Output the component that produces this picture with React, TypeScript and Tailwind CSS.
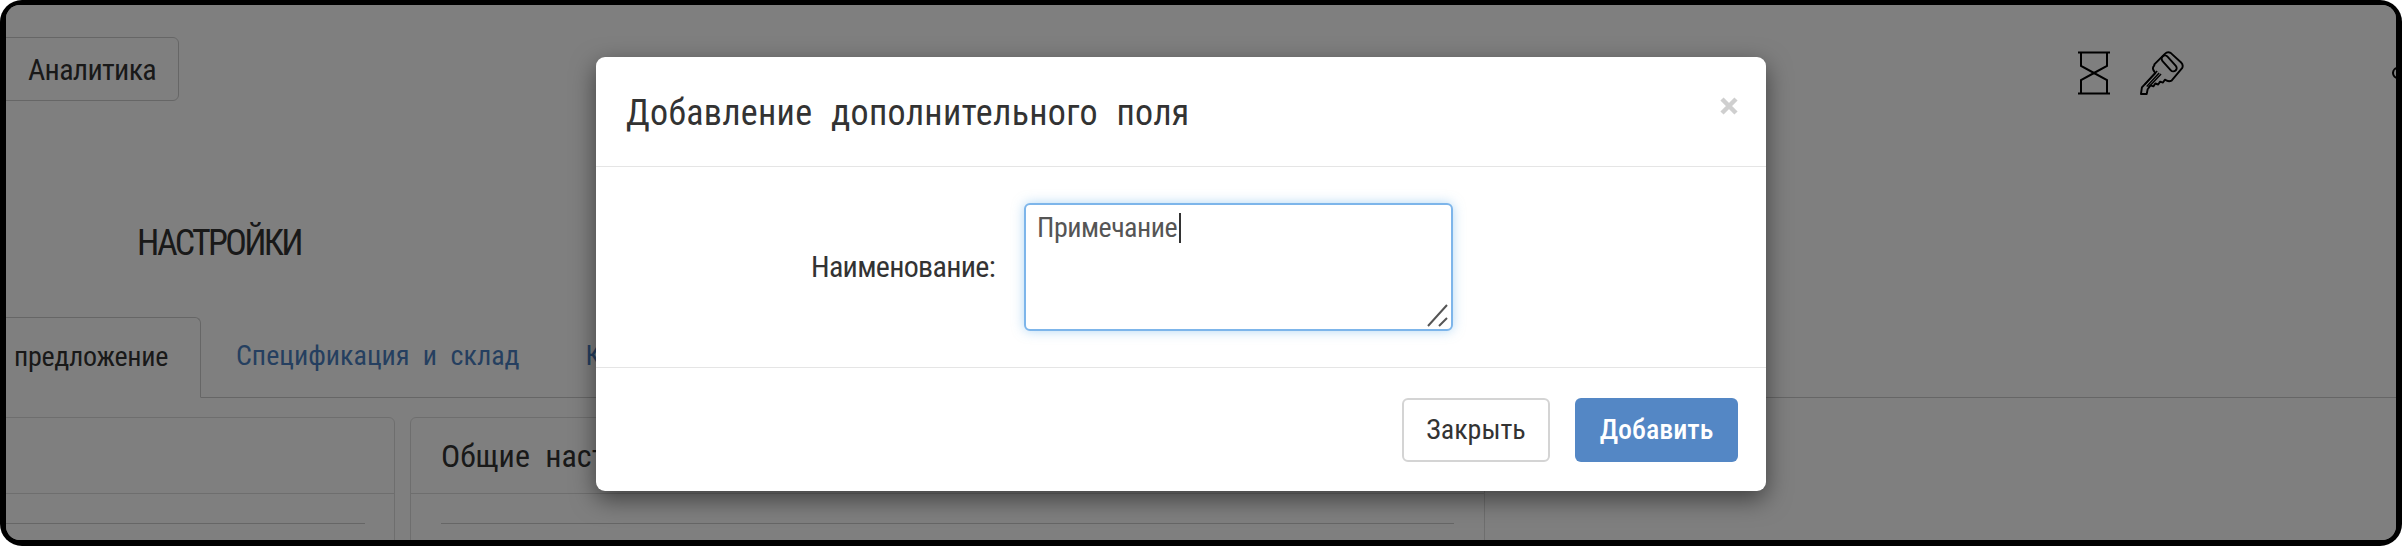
const font = "font-['Roboto',sans-serif] [font-stretch:75%]";

function HourglassIcon() {
  return (
    <svg width="34" height="44" viewBox="0 0 34 44" fill="none" stroke="#000" strokeWidth="2">
      <path d="M1 1.5h32M1 42.5h32" />
      <path d="M4 2v13l13 7 13-7V2" />
      <path d="M4 42V29l13-7 13 7v13" />
    </svg>
  );
}

function KeyIcon() {
  return (
    <svg width="44" height="46" viewBox="0 0 46 46" fill="none" stroke="#000" strokeWidth="2" strokeLinejoin="round">
      <path d="M15 14l11-11c2-2 4-2 6-1l11 10c2 2 2 4 1 6L33 31c-2 1-3 1-5 0l-2-1-2 3-3-1-2 3-3-1-2 3-3-1-3 4-1 5H1l1-7 14-15-2-3c-1-2-1-3 1-5z" />
      <rect x="27" y="3" width="7" height="20" rx="3.5" transform="rotate(-42 30.5 13)" />
      <path d="M5 35l13-14M7 37l13-14M9 38l13-14" strokeWidth="1.5" />
    </svg>
  );
}

export default function App() {
  return (
    <div className={`h-[546px] w-[2402px] overflow-hidden bg-white ${font}`}>
      <div className="h-full rounded-[22px] bg-black pt-[5px] pr-[6px] pb-[6px] pl-[6px]">
        <div className="relative h-full overflow-hidden rounded-[14px] bg-white text-[#333]">
          <header className="flex items-start pt-[32px]">
            <button className="-ml-[8px] h-[64px] w-[181px] rounded-[6px] border border-[#ccc] pl-[29px] text-left text-[30px] tracking-[-0.7px]">
              Аналитика
            </button>
            <div className="ml-auto mt-[13px] flex items-center gap-[29px] pr-[208px]">
              <HourglassIcon />
              <KeyIcon />
            </div>
            <span className="mt-[30px] -mr-[8px] h-[12px] w-[12px] rounded-full border-2 border-black" />
          </header>

          <h1 className="mt-[118px] pl-[131px] text-[36px] leading-[48px] font-normal tracking-[-2.7px]">НАСТРОЙКИ</h1>

          <nav className="mt-[50px] flex h-[81px] border-b border-[#ccc] text-[28px] [word-spacing:7px]">
            <div className="-ml-[8px] h-[81px] w-[203px] rounded-t-[6px] border border-[#ccc] border-b-white bg-white pt-[18px] pl-[15px] tracking-[-0.3px]">
              предложение
            </div>
            <a className="ml-[35px] pt-[18px] text-[#4a7fc0]">Спецификация и склад</a>
            <a className="ml-[66px] pt-[18px] text-[#4a7fc0]">Коммерция</a>
          </nav>

          <section className="mt-[19px] flex gap-[15px]">
            <div className="-ml-[8px] h-[200px] w-[397px] rounded-[6px] border border-[#ddd]">
              <div className="h-[76px] border-b border-[#ddd]" />
              <div className="mt-[29px] mr-[29px] border-t border-[#ccc]" />
            </div>
            <div className="h-[200px] w-[1075px] rounded-[6px] border border-[#ddd]">
              <div className="h-[76px] border-b border-[#ddd] pt-[14px] pl-[30px] text-[32px] [word-spacing:8px]">
                Общие настройки
              </div>
              <div className="mt-[29px] mr-[30px] ml-[30px] border-t border-[#ccc]" />
            </div>
          </section>

          <div className="absolute inset-0 bg-black/50" />
        </div>
      </div>

      <div className="absolute top-[57px] left-[596px] w-[1170px] rounded-[9px] bg-white shadow-[0_8px_24px_rgba(0,0,0,0.5)]">
        <div className="flex h-[110px] items-start justify-between border-b border-[#e5e5e5] pt-[36px] pr-[28px] pl-[30px]">
          <h2 className="text-[36px] leading-[40px] font-normal tracking-[0.3px] text-[#333] [word-spacing:10px]">
            Добавление дополнительного поля
          </h2>
          <svg width="18" height="18" viewBox="0 0 18 18" className="mt-[4px]" stroke="#cfcfcf" strokeWidth="4.5">
            <path d="M2 2l14 14M16 2L2 16" />
          </svg>
        </div>

        <div className="flex h-[201px] items-start border-b border-[#e5e5e5] pt-[36px]">
          <label className="mt-[41px] w-[399px] text-right text-[30px] font-normal tracking-[-0.7px] text-[#333]">
            Наименование:
          </label>
          <div className="relative ml-[29px] h-[128px] w-[429px] rounded-[6px] border-2 border-[#7db5ea] bg-white px-[11px] py-[2px] text-[28px] tracking-[-0.5px] text-[#555] shadow-[0_0_12px_rgba(102,175,233,0.5)]">
            Примечание
            <span className="ml-[2px] inline-block h-[30px] w-[2px] translate-y-[6px] bg-[#333]" />
            <svg width="22" height="24" viewBox="0 0 22 24" className="absolute right-[2px] bottom-[1px]" stroke="#555" strokeWidth="2">
              <path d="M1 22L20 1M12 22l8-8" />
            </svg>
          </div>
        </div>

        <div className="flex h-[123px] items-start justify-end gap-[25px] pt-[30px] pr-[28px]">
          <button className="h-[64px] w-[148px] rounded-[6px] border-2 border-[#d4d4d4] bg-white text-[28px] text-[#333]">
            Закрыть
          </button>
          <button className="h-[64px] w-[163px] rounded-[6px] bg-[#5487c5] text-[28px] font-medium text-white">
            Добавить
          </button>
        </div>
      </div>
    </div>
  );
}
